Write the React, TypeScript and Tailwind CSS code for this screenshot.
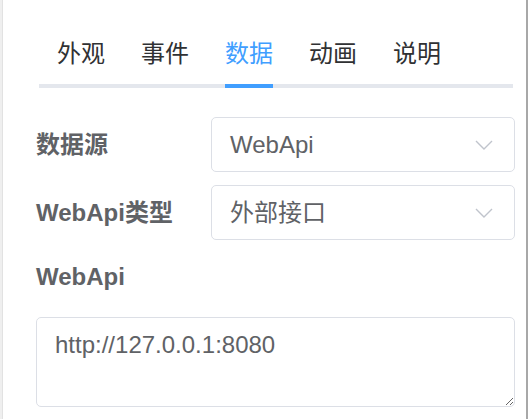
const TABS = ["外观", "事件", "数据", "动画", "说明"]
const ACTIVE = "数据"

function Chevron() {
  return (
    <svg width="18" height="10" viewBox="0 0 18 10" fill="none" className="text-[#c0c4cc]">
      <polyline points="1,1 9,9 17,1" stroke="currentColor" strokeWidth="1.4" />
    </svg>
  )
}

function SelectBox({ value }: { value: string }) {
  return (
    <div className="flex-1 h-[55px] flex items-center justify-between border border-[#dcdfe6] rounded-[5px] pl-[18px] pr-[21px] text-[24px] text-[#606266] bg-white">
      <span>{value}</span>
      <Chevron />
    </div>
  )
}

export default function App() {
  return (
    <div className="w-[528px] h-[419px] flex bg-white overflow-hidden font-['Liberation_Sans','Noto_Sans_CJK_SC',sans-serif]">
      <div className="w-[3px] bg-[#efefef] border-r border-[#e2e2e2]" />
      <div className="flex-1 pt-[24px] pl-[33px] pr-[11px]">
        <div className="flex ml-[3px] mr-[2px] border-b-4 border-[#e4e7ed]">
          {TABS.map((t) => (
            <div key={t} className="px-[18px]">
              <div
                className={
                  "h-[64px] leading-[60px] text-[24px] border-b-4 -mb-1 " +
                  (t === ACTIVE ? "border-[#409eff] text-[#409eff]" : "border-transparent text-[#303133]")
                }
              >
                {t}
              </div>
            </div>
          ))}
        </div>

        <div className="mt-[29px] flex flex-col gap-[13px]">
          <div className="flex items-center">
            <label className="w-[175px] text-[24px] font-bold text-[#606266]">数据源</label>
            <SelectBox value="WebApi" />
          </div>
          <div className="flex items-center">
            <label className="w-[175px] text-[24px] font-bold text-[#606266]">WebApi类型</label>
            <SelectBox value="外部接口" />
          </div>
        </div>

        <div className="mt-[21px] h-[32px] leading-[32px] text-[24px] font-bold text-[#606266]">WebApi</div>
        <textarea
          readOnly
          defaultValue="http://127.0.0.1:8080"
          className="mt-[24px] block w-full h-[90px] border border-[#dcdfe6] rounded-[5px] px-[18px] pt-[9px] text-[24px] leading-[36px] text-[#606266] outline-none"
        />
      </div>
      <div className="w-[2px] bg-[#a8a8a8]" />
    </div>
  )
}
